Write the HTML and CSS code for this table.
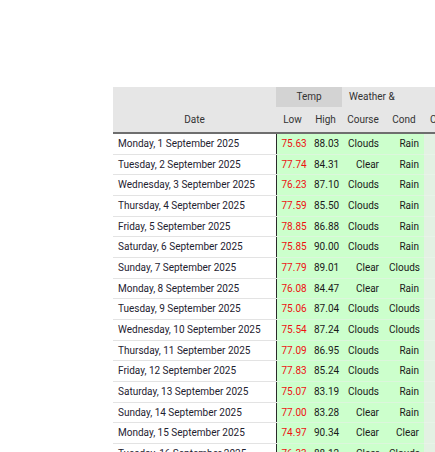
FILE: index.html
```html
<!DOCTYPE html>
<html>
<head>
<meta charset="utf-8">
<link rel="stylesheet" href="styles.css">
</head>
<body>
<div class="wrap">
<table class="grid">
<colgroup>
<col class="c-date"><col class="c-low"><col class="c-high"><col class="c-course"><col class="c-cond"><col class="c-cover">
</colgroup>
<thead>
<tr class="groups">
<th class="g-blank"></th>
<th class="g-temp" colspan="2">Temp</th>
<th class="g-weather" colspan="3">Weather &amp;</th>
</tr>
<tr class="heads">
<th>Date</th><th>Low</th><th>High</th><th>Course</th><th>Cond</th><th class="h-cover">Cloud Cover</th>
</tr>
</thead>
<tbody>
<tr><td class="date">Monday, 1 September 2025</td><td class="low">75.63</td><td class="num">88.03</td><td class="txt">Clouds</td><td class="txt">Rain</td><td class="cover">62%</td></tr>
<tr><td class="date">Tuesday, 2 September 2025</td><td class="low">77.74</td><td class="num">84.31</td><td class="txt">Clear</td><td class="txt">Rain</td><td class="cover">40%</td></tr>
<tr><td class="date">Wednesday, 3 September 2025</td><td class="low">76.23</td><td class="num">87.10</td><td class="txt">Clouds</td><td class="txt">Rain</td><td class="cover">71%</td></tr>
<tr><td class="date">Thursday, 4 September 2025</td><td class="low">77.59</td><td class="num">85.50</td><td class="txt">Clouds</td><td class="txt">Rain</td><td class="cover">66%</td></tr>
<tr><td class="date">Friday, 5 September 2025</td><td class="low">78.85</td><td class="num">86.88</td><td class="txt">Clouds</td><td class="txt">Rain</td><td class="cover">58%</td></tr>
<tr><td class="date">Saturday, 6 September 2025</td><td class="low">75.85</td><td class="num">90.00</td><td class="txt">Clouds</td><td class="txt">Rain</td><td class="cover">69%</td></tr>
<tr><td class="date">Sunday, 7 September 2025</td><td class="low">77.79</td><td class="num">89.01</td><td class="txt">Clear</td><td class="txt">Clouds</td><td class="cover">35%</td></tr>
<tr><td class="date">Monday, 8 September 2025</td><td class="low">76.08</td><td class="num">84.47</td><td class="txt">Clear</td><td class="txt">Rain</td><td class="cover">41%</td></tr>
<tr><td class="date">Tuesday, 9 September 2025</td><td class="low">75.06</td><td class="num">87.04</td><td class="txt">Clouds</td><td class="txt">Clouds</td><td class="cover">77%</td></tr>
<tr><td class="date">Wednesday, 10 September 2025</td><td class="low">75.54</td><td class="num">87.24</td><td class="txt">Clouds</td><td class="txt">Clouds</td><td class="cover">80%</td></tr>
<tr><td class="date">Thursday, 11 September 2025</td><td class="low">77.09</td><td class="num">86.95</td><td class="txt">Clouds</td><td class="txt">Rain</td><td class="cover">64%</td></tr>
<tr><td class="date">Friday, 12 September 2025</td><td class="low">77.83</td><td class="num">85.24</td><td class="txt">Clouds</td><td class="txt">Rain</td><td class="cover">60%</td></tr>
<tr><td class="date">Saturday, 13 September 2025</td><td class="low">75.07</td><td class="num">83.19</td><td class="txt">Clouds</td><td class="txt">Rain</td><td class="cover">72%</td></tr>
<tr><td class="date">Sunday, 14 September 2025</td><td class="low">77.00</td><td class="num">83.28</td><td class="txt">Clear</td><td class="txt">Rain</td><td class="cover">38%</td></tr>
<tr><td class="date">Monday, 15 September 2025</td><td class="low">74.97</td><td class="num">90.34</td><td class="txt">Clear</td><td class="txt">Clear</td><td class="cover">12%</td></tr>
<tr><td class="date">Tuesday, 16 September 2025</td><td class="low">76.33</td><td class="num">88.12</td><td class="txt">Clear</td><td class="txt">Clouds</td><td class="cover">30%</td></tr>
</tbody>
</table>
</div>
</body>
</html>
```
FILE: styles.css
```css
html, body {
  margin: 0;
  padding: 0;
  background: #fff;
  overflow: hidden;
  height: 100%;
}
body {
  font-family: Roboto, "Noto Sans", sans-serif;
  font-size: 10px;
  color: #222;
}
.wrap {
  padding: 87px 0 0 113px;
  width: 600px;
}
.grid {
  border-collapse: collapse;
  table-layout: fixed;
  width: 419px;
}
.c-date { width: 163px; }
.c-low { width: 33px; }
.c-high { width: 33px; }
.c-course { width: 42px; }
.c-cond { width: 40px; }
.c-cover { width: 108px; }
th {
  font-weight: normal;
  color: #333;
  background: #e6e6e6;
  padding: 0 4px;
  text-align: center;
  white-space: nowrap;
  overflow: hidden;
}
.groups th {
  height: 20px;
  line-height: 20px;
}
.groups .g-temp { background: #d3d3d3; }
.groups .g-weather { text-align: left; padding-left: 7px; }
.heads th {
  height: 25px;
  line-height: 25px;
  border-bottom: 2px solid #6e6e6e;
}
.heads .h-cover { text-align: left; padding-left: 6px; }
td {
  padding: 1px 5px 0 5px;
  line-height: 18.65px;
  white-space: nowrap;
  overflow: hidden;
  border-bottom: 1px solid #e3e3e3;
}
td.date {
  color: #1e2230;
  text-align: left;
  border-right: 1px solid #2a2a2a;
}
td.low, td.num, td.txt {
  background: #ccffcc;
  text-align: right;
  border-bottom-color: #dcf6dc;
}
td.low { color: #ee1111; padding-right: 6px; }
td.num, td.txt { color: #1a1a1a; }
td.cover {
  background: #e3f1e3;
  text-align: right;
  border-bottom-color: #e8f3e8;
  color: #1a1a1a;
}
```
